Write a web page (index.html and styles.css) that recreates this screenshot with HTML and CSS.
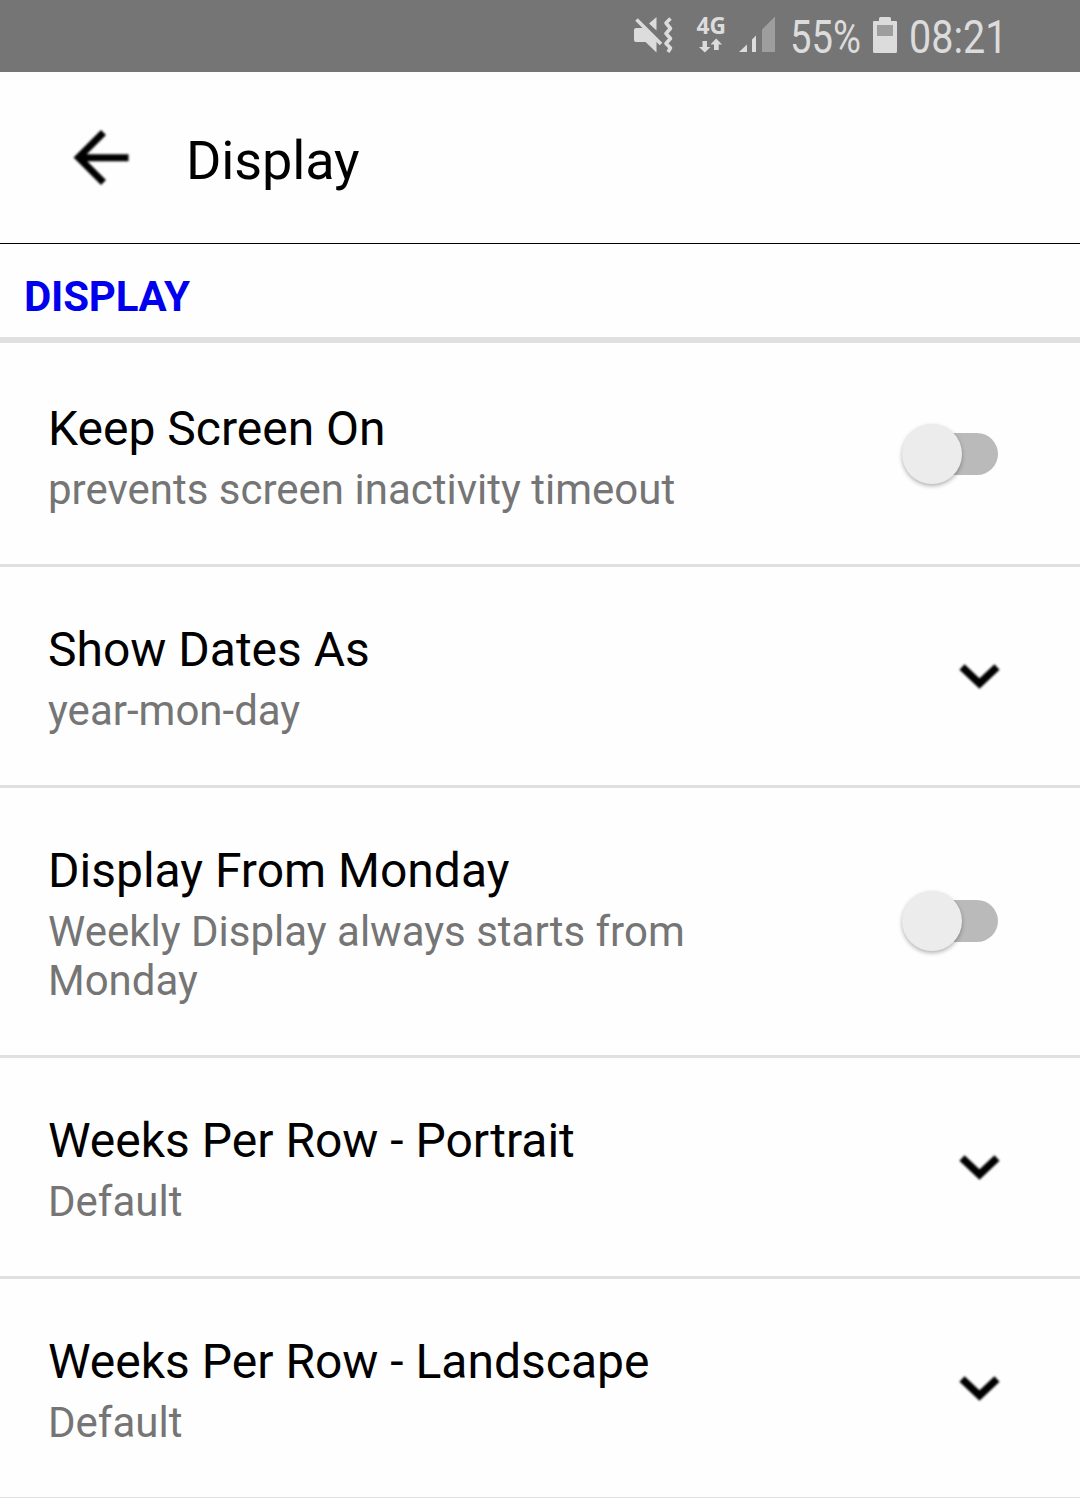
FILE: index.html
```html
<!DOCTYPE html>
<html lang="en">
<head>
<meta charset="utf-8">
<title>Display</title>
<link rel="stylesheet" href="styles.css">
</head>
<body>
<header class="status">
  <svg class="status-icons" width="450" height="72" viewBox="630 0 450 72" fill="#dcdcdc">
    <path d="M634 30Q634 28 636 28H643L656.500 41V52.500L645.500 42H636Q634 42 634 40Z"/>
    <path d="M656.500 17V30.500L649 23.500Z"/>
    <path d="M636.500 19.500L661 44" stroke="#dcdcdc" stroke-width="3.600" fill="none"/>
    <path d="M670.500 18.500L666 23L670.500 28.500L666 33.500L670.500 38.500L666 43.500L670.500 48L668 52" stroke="#dcdcdc" stroke-width="3.600" fill="none" stroke-linejoin="round"/>
    <text class="network" x="696.500" y="34" textLength="29.500" lengthAdjust="spacingAndGlyphs">4G</text>
    <path d="M702.500 41H707V47H710.500L704.800 52.500L699 47H702.500ZM714 50V44.500H710.500L716.200 38.500L722 44.500H718.700V50Z"/>
    <path d="M739 52L747 44.500V52ZM752 39.500L756 35.500V52H752Z"/>
    <path d="M762 29.500L775 16.500V52H762Z" fill="#9e9e9e"/>
    <text class="reading" x="790" y="52.500" textLength="71" lengthAdjust="spacingAndGlyphs">55%</text>
    <path d="M879 21V18.500Q879 17 880.500 17H889.500Q891 17 891 18.500V21H896Q897 21 897 22V51.500Q897 53 895.500 53H874.500Q873 53 873 51.500V22Q873 21 874 21Z"/>
    <path d="M877 25H893V36H877Z" fill="#9e9e9e"/>
    <text class="reading" x="909" y="52.500" textLength="98.500" lengthAdjust="spacingAndGlyphs">08:21</text>
  </svg>
</header>
<div class="toolbar">
  <svg class="back" width="64" height="64" viewBox="70 126 64 64"><path d="M128.500 157.800H79M103.500 132.500L78.500 157.500L103.500 182.500" fill="none" stroke="#000" stroke-width="7"/></svg>
  <h1 class="title">Display</h1>
</div>
<h2 class="section">DISPLAY</h2>
<main class="list">
  <div class="row row-first">
    <div class="text"><div class="name">Keep Screen On</div><div class="summary">prevents screen inactivity timeout</div></div>
    <span class="switch"><span class="thumb"></span></span>
  </div>
  <div class="row">
    <div class="text"><div class="name">Show Dates As</div><div class="summary">year-mon-day</div></div>
    <svg class="chevron" width="44" height="30" viewBox="0 0 44 30"><path d="M4 6L21.500 22.500L39 6"/></svg>
  </div>
  <div class="row">
    <div class="text"><div class="name">Display From Monday</div><div class="summary">Weekly Display always starts from Monday</div></div>
    <span class="switch"><span class="thumb"></span></span>
  </div>
  <div class="row">
    <div class="text"><div class="name">Weeks Per Row - Portrait</div><div class="summary">Default</div></div>
    <svg class="chevron" width="44" height="30" viewBox="0 0 44 30"><path d="M4 6L21.500 22.500L39 6"/></svg>
  </div>
  <div class="row">
    <div class="text"><div class="name">Weeks Per Row - Landscape</div><div class="summary">Default</div></div>
    <svg class="chevron" width="44" height="30" viewBox="0 0 44 30"><path d="M4 6L21.500 22.500L39 6"/></svg>
  </div>
</main>
</body>
</html>
```
FILE: styles.css
```css
* { box-sizing: border-box; }
html { height: 100%; overflow: hidden; }
body {
  height: 1498px;
  margin: 0;
  overflow: hidden;
  background: #fefefe;
  color: #000;
  font-family: Roboto, sans-serif;
}
svg { display: block; flex: none; }
.status {
  display: flex;
  justify-content: flex-end;
  height: 72px;
  background: #757575;
}
.network { font: 700 23px "Open Sans", sans-serif; }
.reading { font: 400 46px Roboto, sans-serif; }
.toolbar {
  display: flex;
  align-items: center;
  gap: 52px;
  height: 172px;
  padding: 0 70px;
  border-bottom: 1px solid #000;
}
.back, .chevron { filter: blur(0.8px); }
.title {
  margin: 7px 0 0;
  font-size: 54px;
  font-weight: 400;
  line-height: 64px;
  letter-spacing: -0.15px;
}
.section {
  height: 99px;
  margin: 0;
  padding: 28px 24px 0;
  border-bottom: 6px solid #e0e0e0;
  color: #00e;
  font-size: 42px;
  font-weight: 700;
  line-height: 49px;
  letter-spacing: -0.2px;
}
.row {
  display: flex;
  align-items: center;
  justify-content: space-between;
  min-height: 221px;
  padding: 50px 80px 50px 48px;
  border-bottom: 3px solid #e0e0e0;
}
.row-first { padding-top: 53px; }
.text { width: 700px; padding-top: 5px; }
.name {
  margin-bottom: 8px;
  font-size: 48px;
  line-height: 56px;
}
.summary {
  color: #757575;
  font-size: 42px;
  line-height: 49px;
}
.chevron { margin-right: -2px; }
.chevron path { fill: none; stroke: #000; stroke-width: 7.500; }
.switch {
  display: flex;
  align-items: center;
  width: 86px;
  height: 42px;
  margin: 0 2px 2px 0;
  border-radius: 21px;
  background: #bababa;
}
.thumb {
  flex: none;
  width: 60px;
  height: 60px;
  margin-left: -10px;
  border-radius: 50%;
  background: #ececec;
  box-shadow: 0 2px 4px rgba(0, 0, 0, 0.3);
}
```
